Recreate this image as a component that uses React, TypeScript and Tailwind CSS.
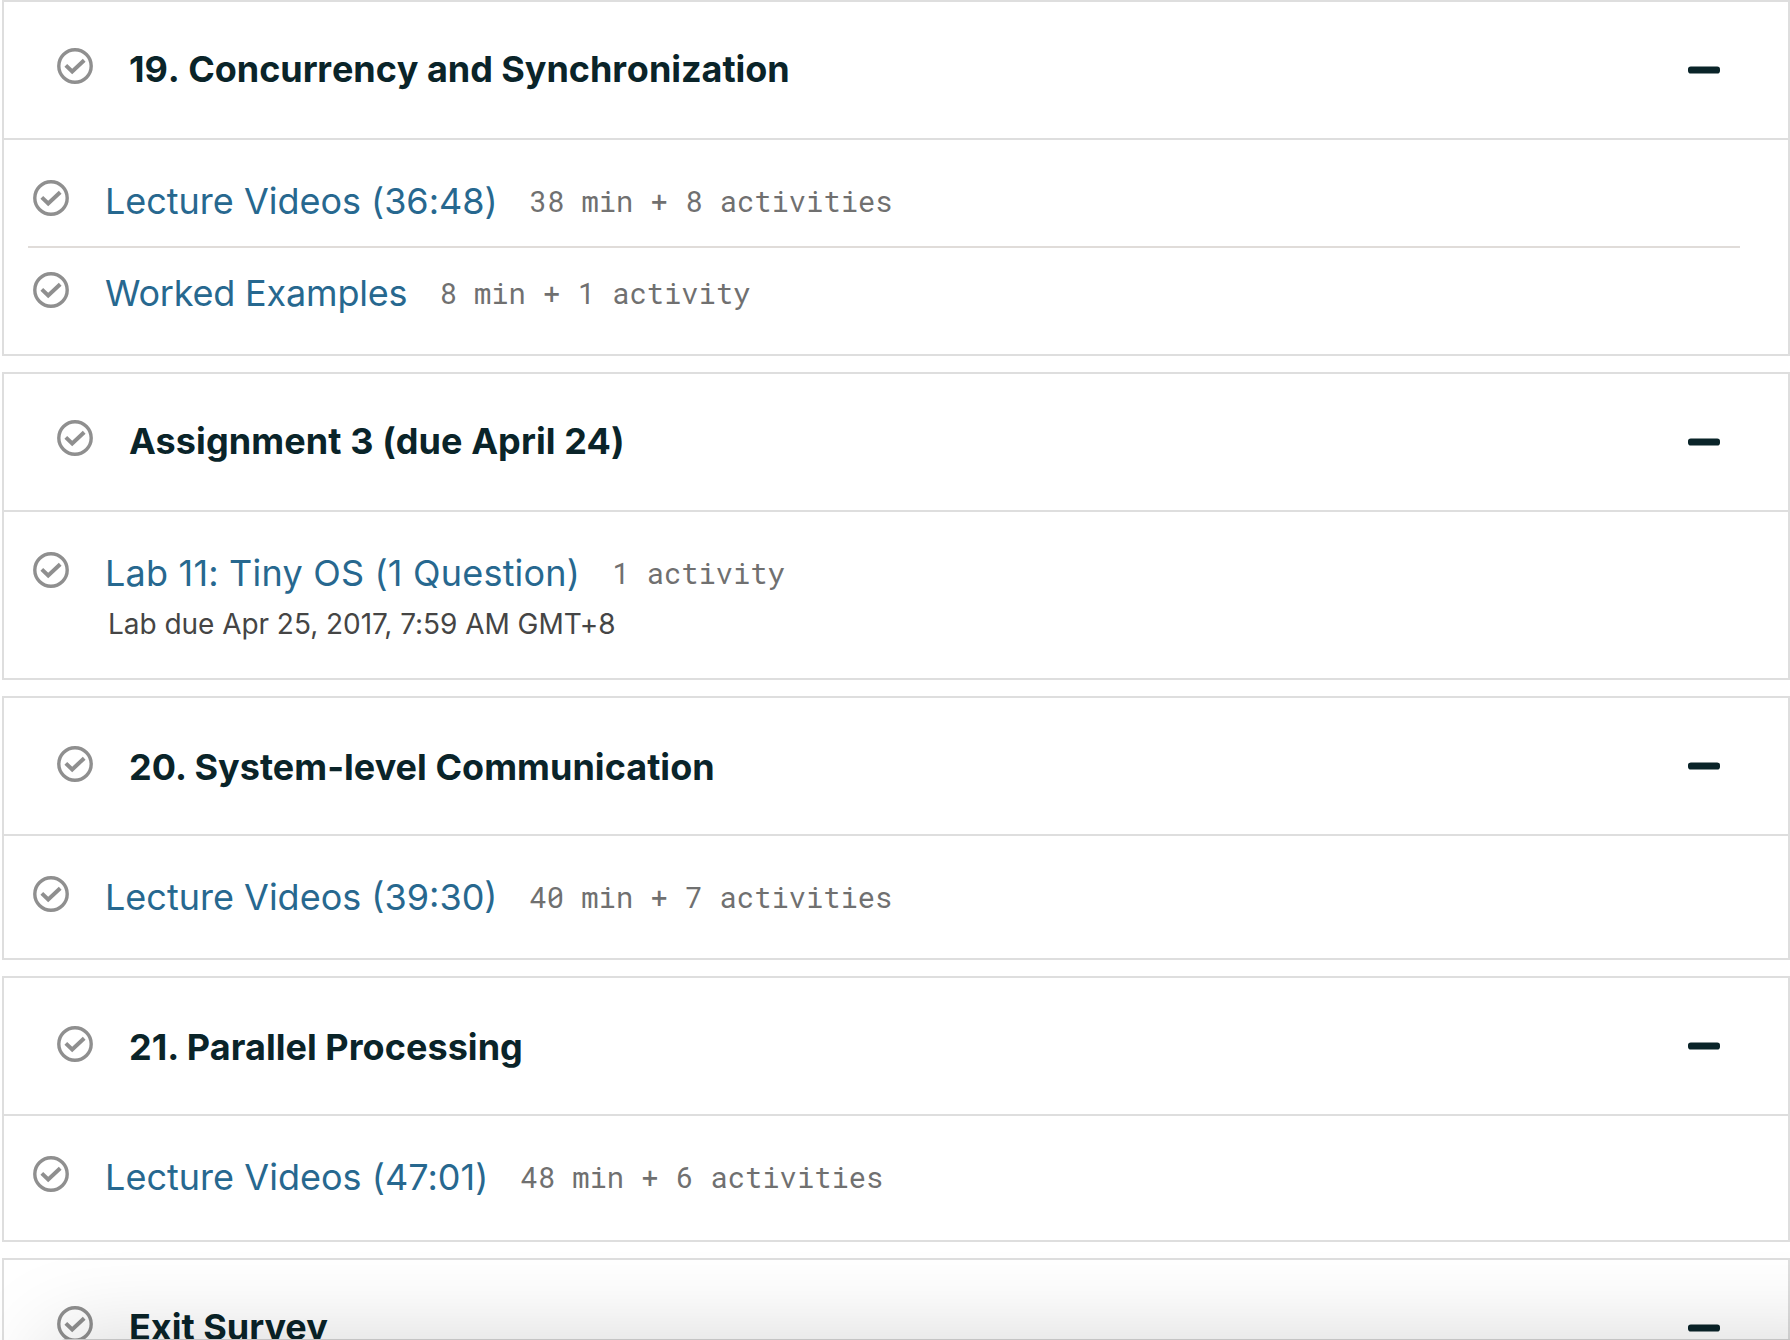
import React from "react";

type Item = { title: string; meta: string; due?: string; tracking: string };
type Section = { title: string; items: Item[]; low?: boolean; tracking: string; bodyClass: string };

const sections: Section[] = [
  {
    title: "19. Concurrency and Synchronization",
    tracking: "tracking-[-0.05px] [font-kerning:none]",
    bodyClass: "h-[214px]",
    items: [
      { title: "Lecture Videos (36:48)", tracking: "tracking-[-0.02px]", meta: "38 min + 8 activities" },
      { title: "Worked Examples", tracking: "tracking-[-0.19px]", meta: "8 min + 1 activity" },
    ],
  },
  {
    title: "Assignment 3 (due April 24)",
    tracking: "tracking-[0.1px]",
    bodyClass: "h-[166px]",
    items: [
      {
        title: "Lab 11: Tiny OS (1 Question)",
        tracking: "tracking-[0.2px]",
        meta: "1 activity",
        due: "Lab due Apr 25, 2017, 7:59 AM GMT+8",
      },
    ],
  },
  {
    title: "20. System-level Communication",
    tracking: "tracking-[0.03px]",
    low: true,
    bodyClass: "h-[122px]",
    items: [{ title: "Lecture Videos (39:30)", tracking: "tracking-[0px]", meta: "40 min + 7 activities" }],
  },
  {
    title: "21. Parallel Processing",
    tracking: "tracking-[0.05px]",
    low: true,
    bodyClass: "h-[124px]",
    items: [{ title: "Lecture Videos (47:01)", tracking: "tracking-[0.03px]", meta: "48 min + 6 activities" }],
  },
  { title: "Exit Survey", tracking: "tracking-[0px]", bodyClass: "h-[124px]", items: [] },
];

function CheckCircle() {
  return (
    <svg viewBox="0 0 36 36" className="size-9 shrink-0" fill="none" stroke="#8f8f8f">
      <circle cx="18" cy="18" r="16.2" strokeWidth="3.4" />
      <path d="M8.8 17.4 L15.2 23.4 L27.2 12.2" strokeWidth="4" />
    </svg>
  );
}

function Row({ item, divided }: { item: Item; divided: boolean }) {
  return (
    <li className={divided ? "border-t-2 border-[#e0dcd9] pt-6" : "pt-[22px] pb-[22px]"}>
      <div className="flex h-11 items-start pl-[5px]">
        <CheckCircle />
        <a className={`ml-9 text-[36px] leading-[42px] whitespace-nowrap text-[#27688f] ${item.tracking}`}>
          {item.title}
        </a>
        <span className="ml-8 pt-[3px] font-['Roboto_Mono','DejaVu_Sans_Mono',monospace] text-[28.8px] leading-[36px] whitespace-pre text-[#707070]">
          {item.meta}
        </span>
      </div>
      {item.due && (
        <p className="pt-2 pl-20 text-[28px] leading-[40px] tracking-[-0.04px] whitespace-nowrap text-[#454545]">
          {item.due}
        </p>
      )}
    </li>
  );
}

function SectionCard({ section }: { section: Section }) {
  return (
    <section className="shrink-0 border-2 border-[#dedede]">
      <header className="flex h-[138px] items-center justify-between border-b-2 border-[#dedede] pr-[68px] pl-[53px]">
        <div className={section.low ? "flex h-12 items-start pt-1" : "flex h-11 items-start"}>
          <CheckCircle />
          <h2 className={`ml-9 text-[36px] leading-[42px] font-bold text-[#0a2429] ${section.tracking}`}>
            {section.title}
          </h2>
        </div>
        <svg viewBox="0 0 32 8" className="h-2 w-8" fill="#0a2429">
          <rect x="0" y="0.5" width="32" height="7" rx="2.8" />
        </svg>
      </header>
      <ul className={`pr-12 pl-6 pt-[18px] ${section.bodyClass}`}>
        {section.items.map((item, i) => (
          <Row key={item.title} item={item} divided={i > 0} />
        ))}
      </ul>
    </section>
  );
}

export default function App() {
  return (
    <div className="relative h-[1340px] w-[1790px] overflow-hidden bg-white font-['Inter',sans-serif]">
      <main className="flex flex-col gap-4 pl-[2px]">
        {sections.map((s) => (
          <SectionCard key={s.title} section={s} />
        ))}
      </main>
      <div className="absolute top-[1339px] -right-24 left-12 h-40 rounded-[20px] bg-[#c4c4c4] shadow-[0_0_90px_rgba(0,0,0,0.17)]" />
    </div>
  );
}
